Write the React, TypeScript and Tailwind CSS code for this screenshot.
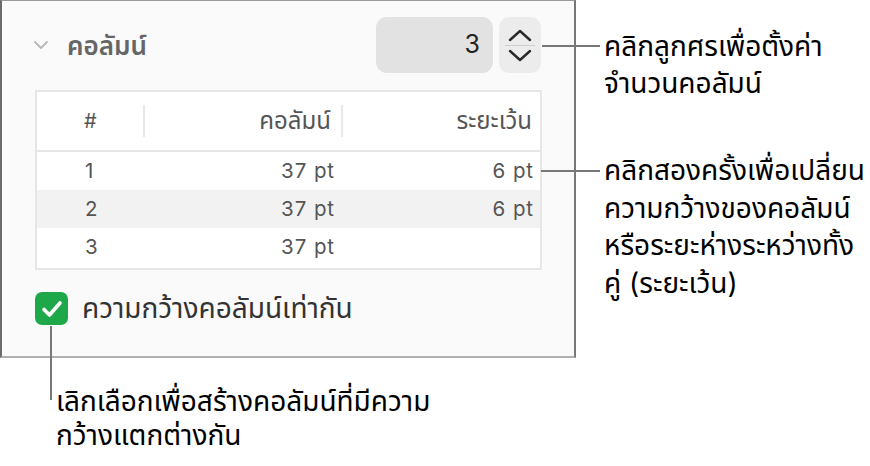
import React from "react";

const font = { fontFamily: '"Inter", "Noto Sans", "Noto Sans Thai", sans-serif' };
const numFont = { fontFamily: '"Inter", sans-serif' };

function Row({ n, w, g, shaded }: { n: string; w: string; g: string; shaded?: boolean }) {
  return (
    <div className={`flex h-[38px] items-center text-[20.5px] tracking-[0.045em] text-[#555] ${shaded ? "bg-[#f2f2f2]" : "bg-white"}`} style={numFont}>
      <div className="w-[108px] pl-[48px]">{n}</div>
      <div className="w-[190px] text-right">{w}</div>
      <div className="flex-1 pr-[6px] text-right">{g}</div>
    </div>
  );
}

export default function App() {
  return (
    <div className="relative h-[466px] w-[870px] bg-white text-black" style={font}>
      {/* Panel */}
      <div className="h-[358px] w-[576px] border-l-2 border-r-2 border-t border-b-2 border-l-[#6b6b6b] border-r-[#777] border-t-[#999] border-b-[#b0b0b0] bg-[#fafafa]">
        <div className="flex h-[89px] items-start pl-[31px] pr-[33px] pt-[16px]">
          <div className="flex h-[56px] items-center">
            <svg width="16" height="10" viewBox="0 0 16 10" className="mr-[18px]">
              <path d="M2 2 L8 8 L14 2" fill="none" stroke="#b8b8b8" strokeWidth="1.8" strokeLinecap="round" strokeLinejoin="round" />
            </svg>
            <span className="text-[26px] font-semibold text-[#666]">คอลัมน์</span>
          </div>
          <div className="ml-auto flex gap-[6px]">
            <div className="flex h-[56px] w-[117px] items-center justify-end rounded-[11px] bg-[#e2e2e2] pr-[13px] text-[25px] text-[#222]" style={numFont}>3</div>
            <div className="flex h-[56px] w-[42px] flex-col items-center justify-center rounded-[10px] bg-[#ececec]">
              <svg width="26" height="14" viewBox="0 0 26 14">
                <path d="M3 12 L13 3 L23 12" fill="none" stroke="#2a2a2a" strokeWidth="2.4" strokeLinecap="round" strokeLinejoin="round" />
              </svg>
              <div className="my-[3px] h-[1px] w-[30px] bg-[#cfcfcf]" />
              <svg width="26" height="14" viewBox="0 0 26 14">
                <path d="M3 2 L13 11 L23 2" fill="none" stroke="#2a2a2a" strokeWidth="2.4" strokeLinecap="round" strokeLinejoin="round" />
              </svg>
            </div>
          </div>
        </div>
        {/* Table */}
        <div className="ml-[33px] w-[507px] border-2 border-[#e6e6e6] bg-white">
          <div className="flex h-[60px] items-center border-b-2 border-[#e6e6e6] text-[#555]">
            <div className="flex h-[32px] w-[108px] items-center border-r-2 border-[#e8e8e8] pl-[47px] text-[20px]" style={numFont}>#</div>
            <div className="flex h-[32px] w-[198px] items-center justify-end border-r-2 border-[#e8e8e8] pr-[10px] text-[24px]">คอลัมน์</div>
            <div className="flex-1 pr-[8px] text-right text-[24px]">ระยะเว้น</div>
          </div>
          <Row n="1" w="37 pt" g="6 pt" />
          <Row n="2" w="37 pt" g="6 pt" shaded />
          <Row n="3" w="37 pt" g="" />
          <div className="h-[2px]" />
        </div>
        <div className="flex items-center pl-[33px] pt-[22px]">
          <div className="flex h-[33px] w-[33px] items-center justify-center rounded-[7px] bg-[#1fa84a]">
            <svg width="22" height="18" viewBox="0 0 22 18">
              <path d="M3 9.5 L8.5 15 L19 3" fill="none" stroke="#fff" strokeWidth="3.6" strokeLinecap="round" strokeLinejoin="round" />
            </svg>
          </div>
          <span className="ml-[14px] text-[28px] leading-[33px] text-[#333]">ความกว้างคอลัมน์เท่ากัน</span>
        </div>
      </div>

      {/* Callout lines */}
      <div className="absolute left-[542px] top-[45px] h-[2px] w-[58px] bg-[#777]" />
      <div className="absolute left-[541px] top-[170px] h-[2px] w-[59px] bg-[#777]" />
      <div className="absolute left-[50px] top-[326px] h-[74px] w-[2px] bg-[#777]" />

      {/* Callout texts */}
      <div className="absolute left-[604px] top-[28px] text-[28px] leading-[37px] text-black">
        <div>คลิกลูกศรเพื่อตั้งค่า</div>
        <div>จำนวนคอลัมน์</div>
      </div>
      <div className="absolute left-[604px] top-[152px] text-[28px] leading-[37.5px] text-black">
        <div>คลิกสองครั้งเพื่อเปลี่ยน</div>
        <div>ความกว้างของคอลัมน์</div>
        <div>หรือระยะห่างระหว่างทั้ง</div>
        <div>คู่ (ระยะเว้น)</div>
      </div>
      <div className="absolute left-[56px] top-[384px] text-[28px] leading-[34px] text-black">
        <div>เลิกเลือกเพื่อสร้างคอลัมน์ที่มีความ</div>
        <div>กว้างแตกต่างกัน</div>
      </div>
    </div>
  );
}
